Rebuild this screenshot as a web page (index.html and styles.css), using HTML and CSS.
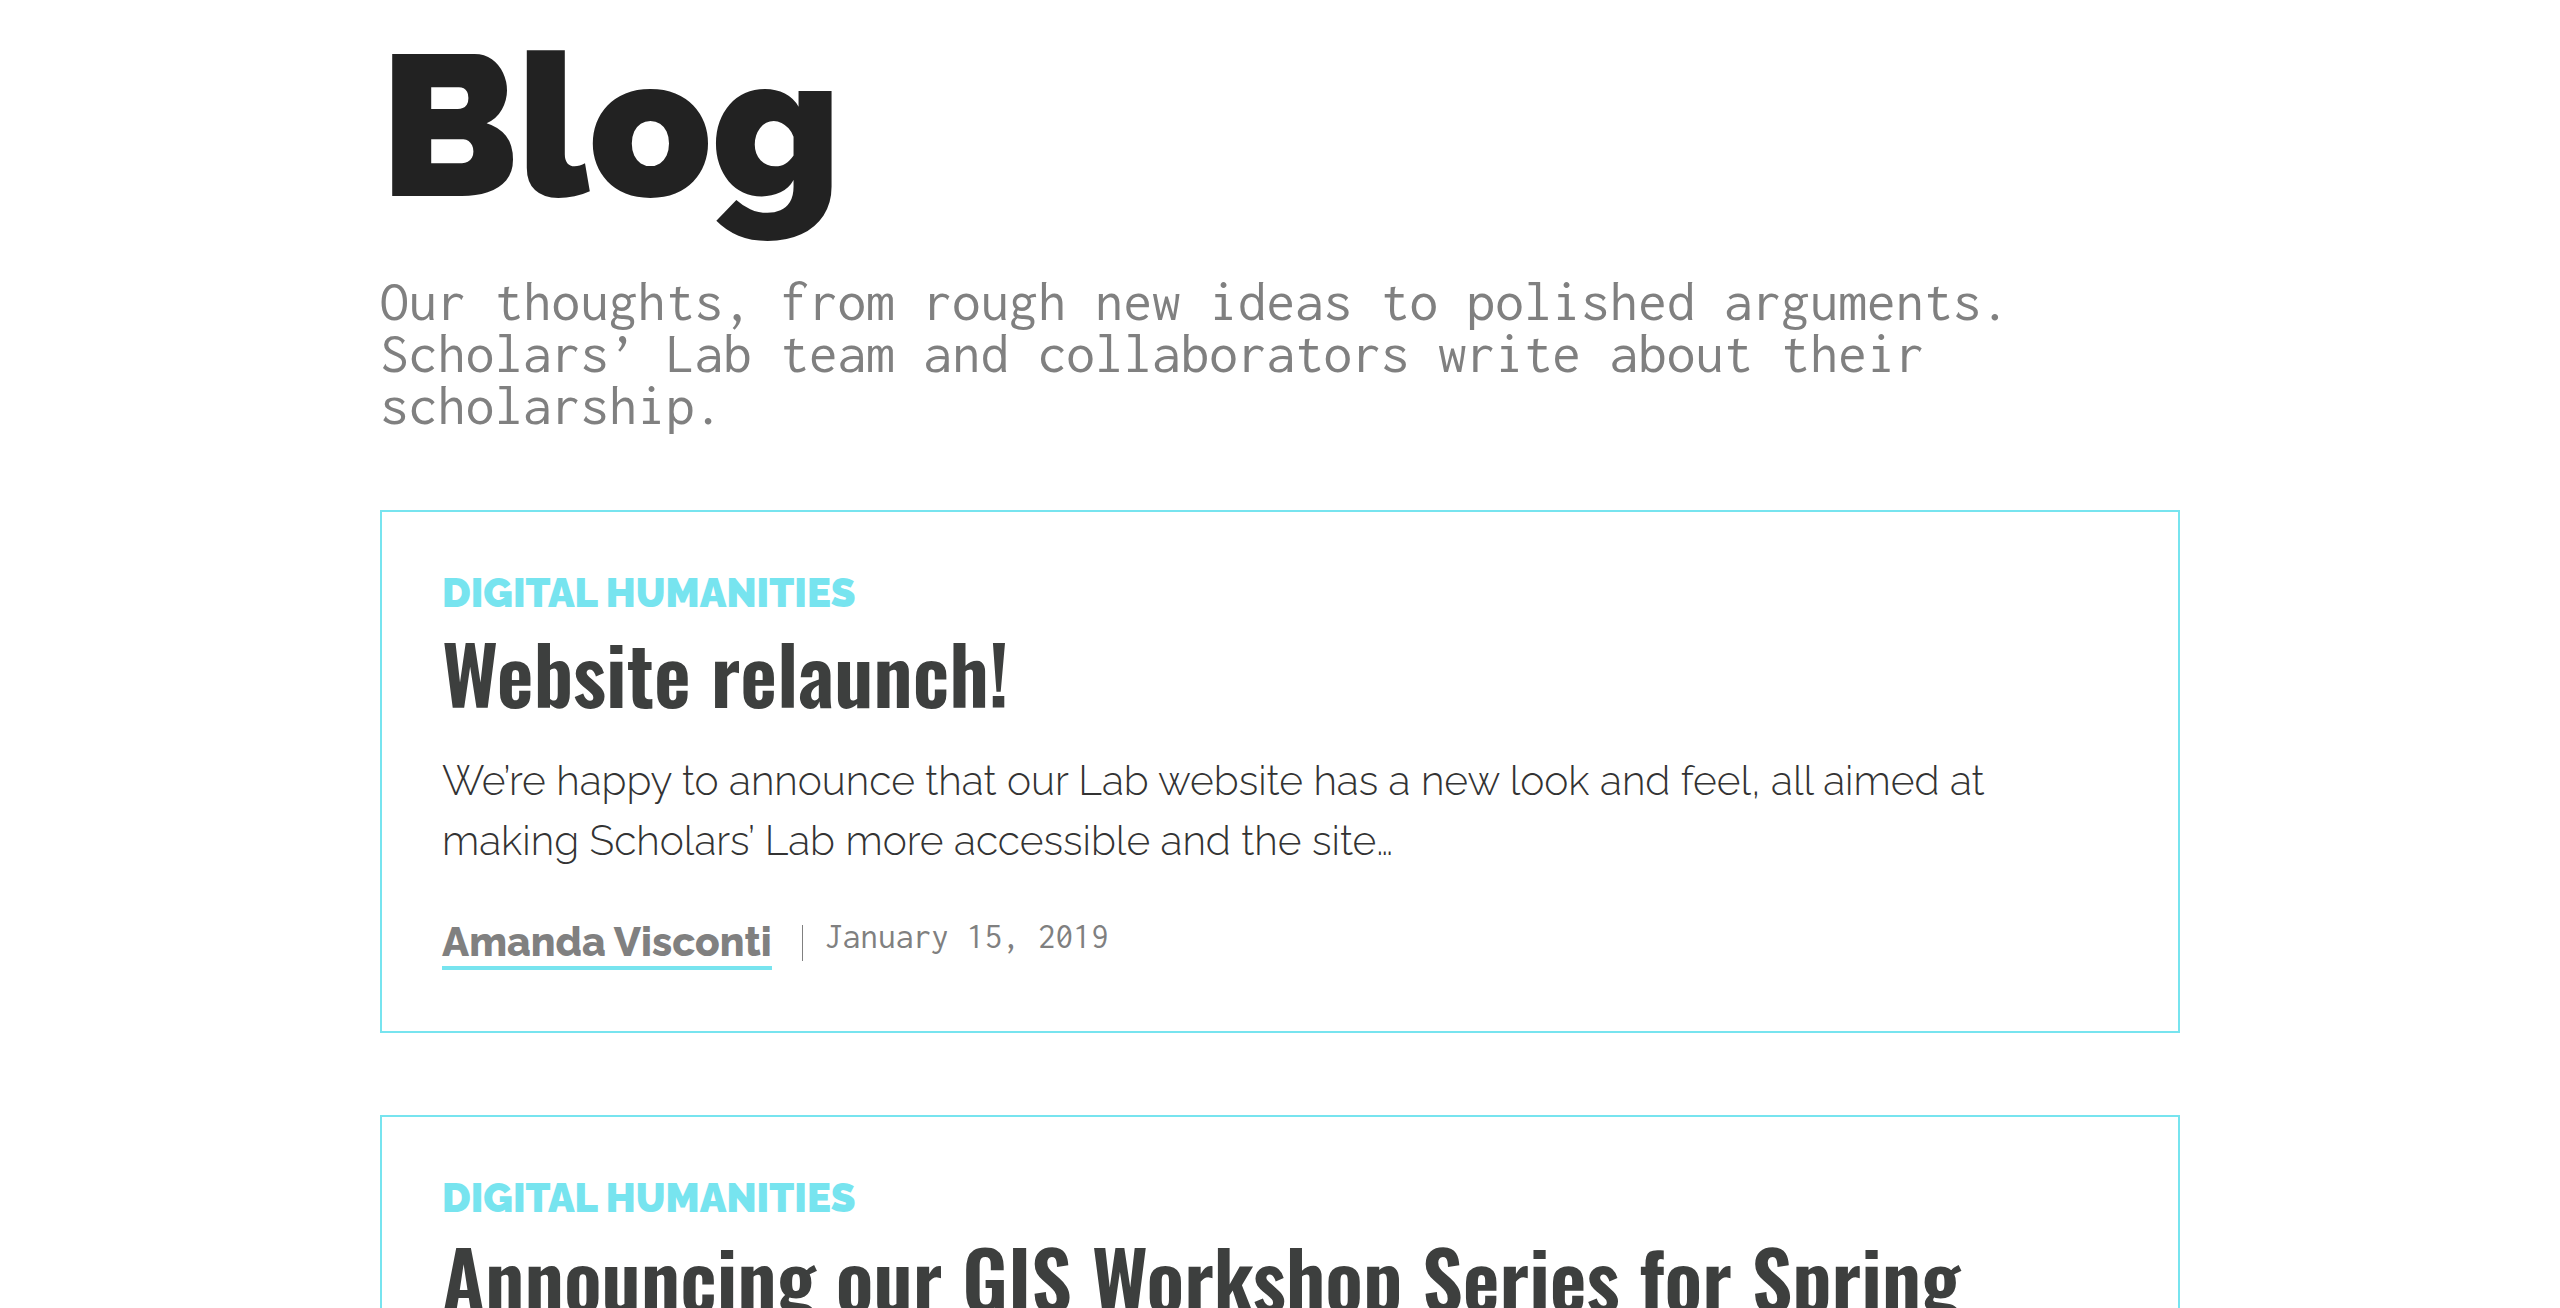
FILE: index.html
```html
<!DOCTYPE html>
<html lang="en">
<head>
<meta charset="utf-8">
<title>Blog | Scholars' Lab</title>
<link rel="stylesheet" href="styles.css">
</head>
<body>
<main class="page">
  <header class="intro">
    <h1 class="intro-title">Blog</h1>
    <p class="intro-lede">Our thoughts, from rough new ideas to polished arguments. Scholars’ Lab team and collaborators write about their scholarship.</p>
  </header>

  <section class="posts">
    <article class="post">
      <a class="post-category" href="#">Digital Humanities</a>
      <h2 class="post-title"><a href="#">Website relaunch!</a></h2>
      <p class="post-excerpt">We’re happy to announce that our Lab website has a new look and feel, all aimed at making Scholars’ Lab more accessible and the site…</p>
      <div class="post-meta">
        <a class="post-author" href="#">Amanda Visconti</a>
        <span class="post-sep"></span>
        <time class="post-date">January 15, 2019</time>
      </div>
    </article>

    <article class="post">
      <a class="post-category" href="#">Digital Humanities</a>
      <h2 class="post-title"><a href="#">Announcing our GIS Workshop Series for Spring 2019</a></h2>
      <p class="post-excerpt">This spring the Scholars’ Lab is offering a series of workshops on geographic information systems, open to all members of the University community…</p>
      <div class="post-meta">
        <a class="post-author" href="#">Drew MacQueen</a>
        <span class="post-sep"></span>
        <time class="post-date">January 10, 2019</time>
      </div>
    </article>
  </section>
</main>
</body>
</html>
```
FILE: styles.css
```css
html, body {
  margin: 0;
  padding: 0;
  background: #ffffff;
}

body {
  font-family: "Raleway", "Lato", sans-serif;
  color: #333333;
}

a {
  color: inherit;
  text-decoration: none;
}

.page {
  width: 1800px;
  margin: 0 auto;
}

.intro {
  padding-top: 26px;
}

.intro-title {
  margin: 0;
  font-family: "Raleway", "Lato", sans-serif;
  font-weight: 900;
  font-size: 200px;
  line-height: 200px;
  color: #222222;
}

.intro-lede {
  margin: 49px 0 0;
  font-family: "Inconsolata", "DejaVu Sans Mono", monospace;
  font-size: 57.2px;
  line-height: 52px;
  color: #808080;
}

.posts {
  display: flex;
  flex-direction: column;
  gap: 82px;
  margin-top: 79px;
}

.post {
  border: 2px solid #77e4ef;
  padding: 57px 60px 61px;
}

.post-category {
  display: block;
  font-weight: 900;
  font-size: 40px;
  line-height: 48px;
  text-transform: uppercase;
  color: #77e4ef;
}

.post-title {
  margin: 7px 0 0;
  font-family: "Oswald", "Liberation Sans", sans-serif;
  font-weight: 600;
  font-size: 80px;
  line-height: 96px;
  color: #3d3f3e;
}

.post-excerpt {
  margin: 31px 0 0;
  font-weight: 300;
  font-size: 40.7px;
  line-height: 60px;
  color: #333333;
}

.post-meta {
  display: flex;
  align-items: flex-start;
  margin-top: 47px;
}

.post-author {
  font-weight: 800;
  font-size: 40.5px;
  line-height: 48px;
  color: #808080;
  border-bottom: 4px solid #77e4ef;
}

.post-sep {
  width: 1px;
  height: 36px;
  margin: 7px 22px 0 30px;
  background: #808080;
}

.post-date {
  margin-top: -1px;
  font-family: "Inconsolata", "DejaVu Sans Mono", monospace;
  font-size: 35.5px;
  line-height: 40px;
  color: #808080;
}
```
